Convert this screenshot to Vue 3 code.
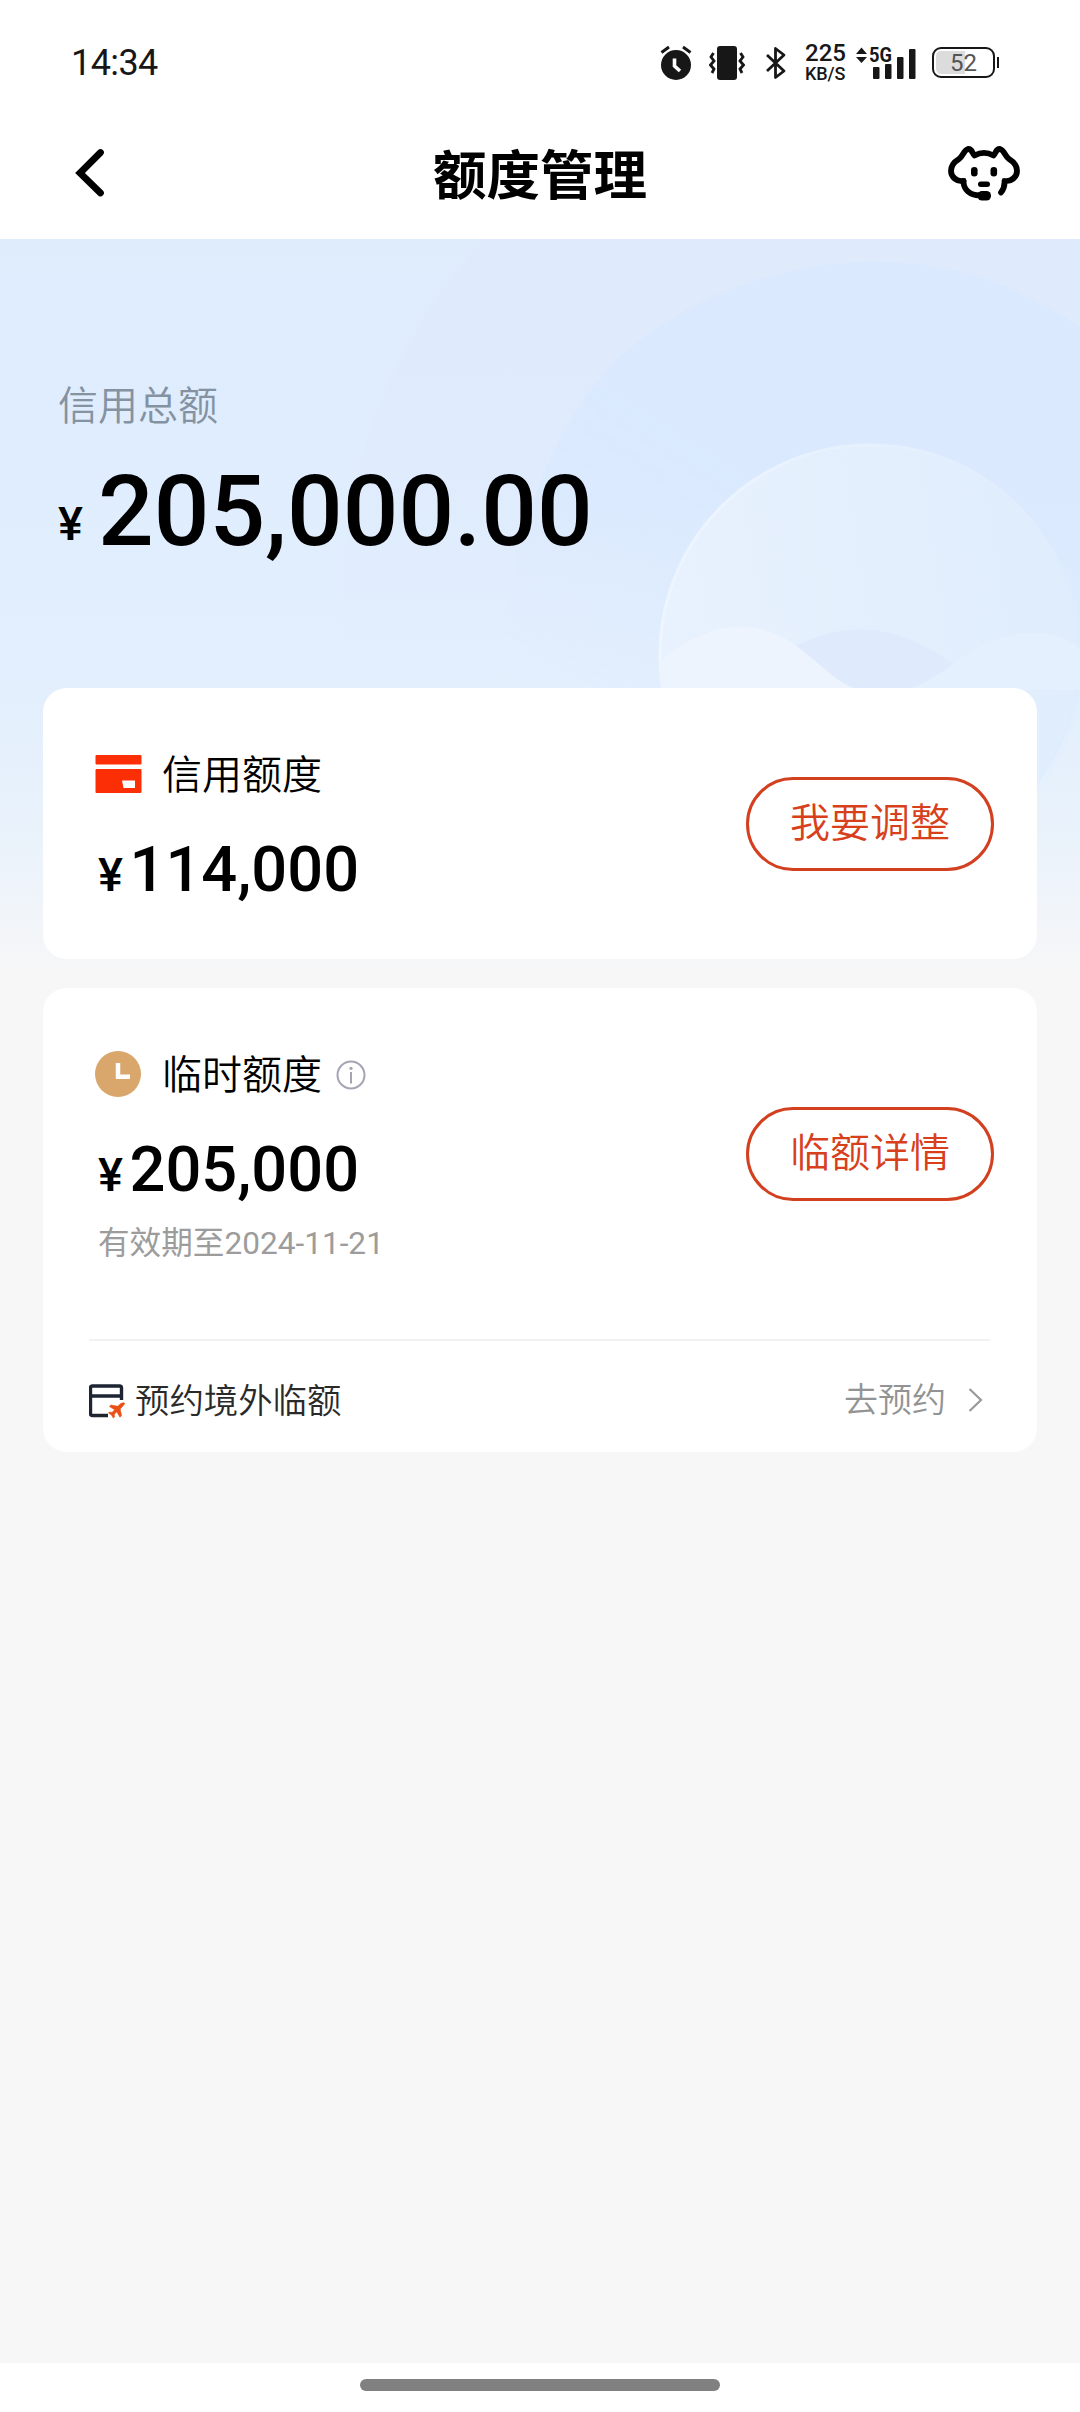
<script setup>
const overview = { label: '信用总额', amount: '205,000.00' }
const credit = { title: '信用额度', amount: '114,000', action: '我要调整' }
const temporary = {
  title: '临时额度',
  amount: '205,000',
  expiry: '有效期至2024-11-21',
  action: '临额详情',
}
</script>

<template>
  <div class="page">
    <header class="top">
      <div class="status">
        <span class="time">14:34</span>
        <div class="status-icons">
          <svg class="alarm" width="32" height="36" viewBox="0 0 32 36">
            <circle cx="16" cy="20" r="15" fill="#171717" />
            <path d="M1.500 7.500 9 2M30.500 7.500 23 2" stroke="#171717" stroke-width="3" fill="none" />
            <path d="M14.500 13.500v7.500l5.500 5" stroke="#fff" stroke-width="3.600" fill="none" />
          </svg>
          <svg class="vibrate" width="36" height="36" viewBox="0 0 36 36">
            <rect x="8" y="1" width="20" height="34" rx="3" fill="#171717" />
            <path d="M4.500 8 2 12l3 4-3.500 4L5 24l-2 4M31.500 8l2.500 4-3 4 3.500 4-3.500 4 2 4" stroke="#171717" stroke-width="2.800" fill="none" />
          </svg>
          <svg class="bluetooth" width="22" height="36" viewBox="0 0 22 36">
            <path d="M2 10 19 26 10.500 32.500V3.500L19 10 2 26" stroke="#171717" stroke-width="2.800" fill="none" stroke-linejoin="round" />
          </svg>
          <div class="speed"><b>225</b><span>KB/S</span></div>
          <svg class="signal" width="60" height="46" viewBox="0 -5 60 46">
            <path d="M0 9 5.500 2.500 11 9zM0 12h11l-5.500 6z" fill="#171717" />
            <text x="13" y="17" textLength="23" lengthAdjust="spacingAndGlyphs" class="net">5G</text>
            <rect x="17" y="22" width="6.500" height="12" rx="1" fill="#171717" />
            <rect x="29" y="19" width="6.500" height="15" rx="1" fill="#171717" />
            <rect x="41" y="12" width="6.500" height="22" rx="1" fill="#171717" />
            <rect x="53" y="4" width="6.500" height="30" rx="1" fill="#171717" />
          </svg>
          <div class="battery"><div class="cell">52</div><i></i></div>
        </div>
      </div>
      <nav class="nav">
        <svg class="back" width="34" height="52" viewBox="0 0 34 52">
          <path d="M27.500 5.500 7 26 27.500 46" fill="none" stroke="#000" stroke-width="6.800" stroke-linecap="round" />
        </svg>
        <h1>额度管理</h1>
        <svg class="service" width="72" height="56" viewBox="0 0 72 56">
          <g fill="none" stroke="#000" stroke-width="5.800" stroke-linecap="round" stroke-linejoin="round">
            <path d="M15.500 35C9 36 3 31 3 25c0-6 3-9 8-12 4-3 5-9 9-10 4-.5 4 4 6.500 6.500 6-3.300 13-3.300 19 0C48 7 48 2.500 52 3c4 1 5 7 9 10 5 3 8 6 8 12 0 6-6 11-12.500 10 .300 5-1 8.500-3.500 11.500" />
            <path d="M15.500 35c0 8.500 6 14 16.500 14.500" />
          </g>
          <rect x="23" y="21" width="6.600" height="9.500" rx="3.300" />
          <rect x="42.500" y="21" width="6.600" height="9.500" rx="3.300" />
          <rect x="30" y="35.500" width="12" height="5.500" rx="2.700" />
          <rect x="29.500" y="45" width="13.500" height="9.600" rx="4.500" />
        </svg>
      </nav>
    </header>

    <main class="content">
      <svg class="backdrop" width="1080" height="740" viewBox="0 239 1080 740">
        <defs>
          <linearGradient id="sky" x1="0" y1="0" x2="0" y2="1">
            <stop offset="0" stop-color="#dfecfc" />
            <stop offset=".3" stop-color="#dfedfe" />
            <stop offset=".62" stop-color="#e3effd" />
            <stop offset=".8" stop-color="#e9f2fb" />
            <stop offset=".93" stop-color="#f2f5f9" />
            <stop offset="1" stop-color="#f7f7f7" />
          </linearGradient>
          <linearGradient id="blob" gradientUnits="userSpaceOnUse" x1="0" y1="262" x2="0" y2="830">
            <stop offset="0" stop-color="#dae9fe" />
            <stop offset=".42" stop-color="#dae9fe" />
            <stop offset=".75" stop-color="#dfedfd" />
            <stop offset="1" stop-color="#e6f1fc" />
          </linearGradient>
          <linearGradient id="fade" gradientUnits="userSpaceOnUse" x1="540" y1="660" x2="690" y2="430">
            <stop offset="0" stop-color="#fff" stop-opacity="0" />
            <stop offset=".6" stop-color="#fff" stop-opacity=".8" />
            <stop offset="1" stop-color="#fff" />
          </linearGradient>
          <mask id="soft" maskUnits="userSpaceOnUse" x="400" y="239" width="680" height="740">
            <rect x="400" y="239" width="680" height="740" fill="url(#fade)" />
          </mask>
          <linearGradient id="disc" gradientUnits="userSpaceOnUse" x1="680" y1="640" x2="1070" y2="580">
            <stop offset="0" stop-color="#e8f1fe" />
            <stop offset="1" stop-color="#dfedfc" />
          </linearGradient>
          <linearGradient id="rim" gradientUnits="userSpaceOnUse" x1="660" y1="0" x2="1080" y2="0">
            <stop offset="0" stop-color="#edf5ff" />
            <stop offset="1" stop-color="#dfecfd" />
          </linearGradient>
          <linearGradient id="halo" gradientUnits="userSpaceOnUse" x1="0" y1="239" x2="0" y2="690">
            <stop offset="0" stop-color="#dfe9fb" stop-opacity=".6" />
            <stop offset="1" stop-color="#dfe9fb" stop-opacity="0" />
          </linearGradient>
        </defs>
        <rect y="239" width="1080" height="740" fill="url(#sky)" />
        <circle cx="870" cy="600" r="528" fill="url(#halo)" />
        <path mask="url(#soft)" d="M505 700C500 580 535 445 616 360 690 294 780 262 877 262c80 0 145 25 203 65v376q-16 55-43 90-35 45-75 55H560z" fill="url(#blob)" />
        <circle cx="870" cy="655" r="210" fill="url(#disc)" stroke="url(#rim)" stroke-width="3" />
        <path d="M780 655Q871 597 960 670V700H780z" fill="#dfebfc" />
        <path d="M660 662c55-48 105-43 143-11 28 22 35 33 57 39h-199z" fill="#edf4fe" />
        <path d="M905 690c45-12 60-50 120-57 25-2 43 5 55 15v42z" fill="#e5f0fe" />
      </svg>

      <section class="overview">
        <p>{{ overview.label }}</p>
        <div class="total"><span>¥</span><strong>{{ overview.amount }}</strong></div>
      </section>

      <section class="card credit">
        <div class="info">
          <h2>
            <svg width="48" height="48" viewBox="0 0 48 48">
              <rect x=".500" y="5" width="46" height="9.500" rx="1" fill="#fb2e06" />
              <path d="M1.500 19h44q1 0 1 1v22q0 1-1 1h-44q-1 0-1-1v-22q0-1 1-1zM27 30.500l1.500 7.500H40v-7.500z" fill="#fb2e06" fill-rule="evenodd" />
            </svg>
            <span>{{ credit.title }}</span>
          </h2>
          <div class="amount"><span>¥</span><strong>{{ credit.amount }}</strong></div>
        </div>
        <button>{{ credit.action }}</button>
      </section>

      <section class="card temporary">
        <div class="upper">
          <div class="info">
            <h2>
              <svg width="48" height="48" viewBox="0 0 48 48">
                <circle cx="23" cy="24" r="23" fill="#d9a66c" />
                <path d="M23 13v13.800h12" fill="none" stroke="#fff" stroke-width="4.500" />
              </svg>
              <span>{{ temporary.title }}</span>
              <svg class="hint" width="30" height="30" viewBox="0 0 30 30">
                <circle cx="15" cy="15" r="13.500" fill="none" stroke="#a4a4b4" stroke-width="2" />
                <path d="M15 12v11.500" stroke="#a4a4b4" stroke-width="2" />
                <circle cx="15" cy="8.300" r="1.600" fill="#a4a4b4" />
              </svg>
            </h2>
            <div class="amount"><span>¥</span><strong>{{ temporary.amount }}</strong></div>
            <p class="expiry">{{ temporary.expiry }}</p>
          </div>
          <button>{{ temporary.action }}</button>
        </div>
        <div class="booking">
          <svg width="38" height="36" viewBox="1 0 38 36">
            <path d="M20 32.500H4.500q-2 0-2-2V5q0-2 2-2h27q2 0 2 2v12M2.500 13h31" fill="none" stroke="#1d2532" stroke-width="3.400" />
            <path d="M36.500 20c-1.500-.700-3.500.2-4.800 1.500l-2 1.800-6.700-1.300-1.500 1.600 5.200 3.100-2.700 2.700-2.500-.400-1 1 3 1.900 1.800 3.200 1.200-1-.3-2.700 2.600-2.600 3.100 5.400 1.600-1.500-1.300-6.800 1.900-2c1.400-1.400 2.600-2.700 2.400-3.900z" fill="#ea5015" stroke="#ea5015" stroke-width=".600" />
          </svg>
          <span>预约境外临额</span>
          <a>去预约</a>
          <svg class="arrow" width="18" height="28" viewBox="0 0 18 28">
            <path d="M2.500 3 14 14 2.500 25" fill="none" stroke="#999" stroke-width="2.200" />
          </svg>
        </div>
      </section>
    </main>

    <footer><i></i></footer>
  </div>
</template>

<style>
body {
  margin: 0;
  background: #fff;
}
</style>

<style scoped>
.page {
  display: flex;
  flex-direction: column;
  width: 1080px;
  height: 2412px;
  overflow: hidden;
  background: #fff;
  color: #000;
  font-family: Roboto, "Noto Sans CJK SC", sans-serif;
}
h1,
h2,
p {
  margin: 0;
  font-weight: 400;
}
.top {
  box-sizing: border-box;
  height: 239px;
}
.status {
  box-sizing: border-box;
  display: flex;
  justify-content: space-between;
  height: 125px;
  padding: 0 81px 0 71px;
  align-items: center;
}
.time {
  font-size: 36px;
  letter-spacing: -0.6px;
  color: #171717;
}
.status-icons {
  display: flex;
  align-items: center;
}
.alarm {
  margin-left: -1px;
}
.vibrate {
  margin-left: 17px;
}
.bluetooth {
  margin-left: 20px;
}
.speed {
  display: flex;
  flex-direction: column;
  width: 43px;
  margin-left: 18px;
  color: #171717;
}
.speed b {
  font-size: 24px;
  font-weight: 500;
  line-height: 21px;
}
.speed span {
  font-size: 18px;
  font-weight: 500;
  line-height: 19px;
  letter-spacing: -0.1px;
}
.signal {
  margin-left: 8px;
}
.net {
  font-size: 21px;
  font-weight: 700;
  fill: #171717;
}
.battery {
  display: flex;
  align-items: center;
  margin-left: 16px;
}
.cell {
  box-sizing: border-box;
  width: 63px;
  height: 31px;
  border: 2.5px solid #171717;
  border-radius: 9px;
  background: linear-gradient(90deg, #dcdcdc 52%, #fff 52%) content-box;
  padding: 2px;
  text-align: center;
  font-size: 24px;
  line-height: 24px;
  color: #555;
}
.battery i {
  width: 2.5px;
  height: 11px;
  margin-left: 1.5px;
  background: #171717;
}
.nav {
  display: flex;
  align-items: center;
  justify-content: space-between;
  height: 96px;
  padding: 0 60px 0 73px;
}
.nav h1 {
  font-size: 53.5px;
  font-weight: 700;
  line-height: 80px;
  margin: 8px 0 0 25px;
}
.service {
  margin-top: 1px;
}
.content {
  position: relative;
  flex: 1;
  padding: 0 43px;
  background: #f7f7f7;
}
.backdrop {
  position: absolute;
  top: 0;
  left: 0;
}
.overview {
  position: relative;
  box-sizing: border-box;
  height: 449px;
  padding: 138px 0 0 15px;
}
.overview p {
  font-size: 40px;
  font-weight: 350;
  line-height: 60px;
  color: #8492a2;
}
.total {
  display: flex;
  align-items: baseline;
  margin-top: 15px;
  line-height: 120px;
}
.total span {
  width: 40px;
  font-size: 47px;
  font-weight: 500;
  position: relative;
  top: -5px;
}
.total strong {
  font-size: 98px;
  font-weight: 500;
}
.card {
  position: relative;
  box-sizing: border-box;
  border-radius: 24px;
  background: #fff;
}
.credit {
  display: flex;
  justify-content: space-between;
  height: 271px;
  padding: 56px 43px 0 52px;
}
.info h2 {
  display: flex;
  align-items: center;
  height: 60px;
  font-size: 40px;
  font-weight: 350;
}
.info h2 span {
  margin: -5px 0 0 19px;
}
.info h2 .hint {
  margin: 2px 0 0 14px;
}
.amount {
  display: flex;
  align-items: baseline;
  height: 76px;
  margin: 27px 0 0 3px;
  line-height: 76px;
}
.amount span {
  width: 31.5px;
  font-size: 47px;
  font-weight: 500;
}
.amount strong {
  font-size: 63.2px;
  font-weight: 500;
}
button {
  box-sizing: border-box;
  width: 248px;
  height: 94px;
  margin: 33px 0 0;
  padding: 0 0 9px;
  border: 3px solid #d3401f;
  border-radius: 47px;
  background: #fff;
  color: #d8401c;
  font: 350 40px/60px "Noto Sans CJK SC", sans-serif;
}
.temporary {
  height: 464px;
  margin-top: 29px;
  padding: 56px 43px 0 46px;
}
.upper {
  display: flex;
  justify-content: space-between;
  height: 295px;
  padding-left: 6px;
}
.temporary button {
  margin-top: 63px;
}
.expiry {
  margin: 13px 0 0 3px;
  font-size: 31.6px;
  line-height: 48px;
  color: #9c9c9c;
}
.booking {
  display: flex;
  align-items: center;
  height: 110px;
  margin-right: 4px;
  border-top: 2px solid #f2f2f2;
  font-size: 34.4px;
  font-weight: 350;
  color: #2a2a2a;
}
.booking span {
  margin: 4px 0 0 8px;
}
.booking > svg {
  margin-top: 10px;
}
.booking a {
  margin: 3px 21px 0 auto;
  font-size: 34px;
  color: #939393;
}
.booking .arrow {
  margin: 7px 5px 0 0;
}
footer {
  display: flex;
  justify-content: center;
  height: 49px;
}
footer i {
  width: 360px;
  height: 12px;
  margin-top: 16px;
  border-radius: 6px;
  background: #808080;
}
</style>
